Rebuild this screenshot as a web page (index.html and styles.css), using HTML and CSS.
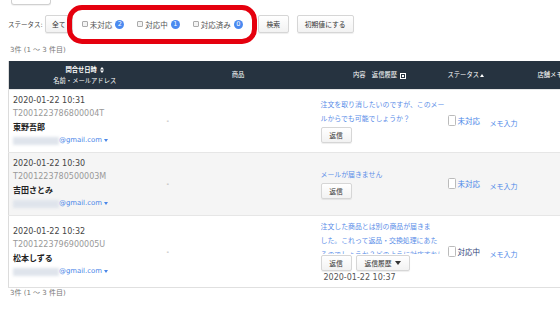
FILE: index.html
```html
<!DOCTYPE html>
<html lang="ja">
<head>
<meta charset="utf-8">
<title>問合せ一覧</title>
<link rel="stylesheet" href="styles.css">
</head>
<body>
<div class="page">
  <div class="top-btn"></div>
  <div class="filter">
    <span class="filter-label">ステータス:</span>
    <button class="btn btn-all">全て</button>
    <label class="chk"><span class="box"></span>未対応<span class="badge">2</span></label>
    <label class="chk"><span class="box"></span>対応中<span class="badge">1</span></label>
    <label class="chk"><span class="box"></span>対応済み<span class="badge">0</span></label>
    <button class="btn btn-search">検索</button>
    <button class="btn btn-reset">初期値にする</button>
  </div>
  <div class="count">3件 (1 ～ 3 件目)</div>
  <div class="table-wrap">
    <table class="list">
      <colgroup>
        <col class="c1"><col class="c2"><col class="c3"><col class="c4"><col class="c5">
      </colgroup>
      <thead>
        <tr>
          <th class="th-center"><div class="th-bold">問合せ日時 <svg class="ico" width="4" height="6" viewBox="0 0 4 6"><path d="M2 0L4 2.5H0Z M2 6L0 3.5H4Z" fill="#fff"/></svg></div><div>名前・メールアドレス</div></th>
          <th class="th-center">商品</th>
          <th class="th-center">内容　返信履歴 <svg class="ico" width="6" height="6" viewBox="0 0 6 6"><rect x=".5" y=".5" width="5" height="5" fill="none" stroke="#fff"/><rect x="2" y="2" width="2" height="2" fill="#fff"/></svg></th>
          <th class="th-left">ステータス<svg class="ico" width="4" height="3" viewBox="0 0 4 3"><path d="M2 0L4 3H0Z" fill="#fff"/></svg></th>
          <th class="th-memo">店舗メモ</th>
        </tr>
      </thead>
      <tbody>
        <tr>
          <td class="who">
            <div class="date">2020-01-22 10:31</div>
            <div class="oid">T2001223786800004T</div>
            <div class="name">東野吾郎</div>
            <div class="email"><span class="blur"></span>@gmail.com <svg class="caret" width="4" height="3" viewBox="0 0 4 3"><path d="M0 0H4L2 3Z" fill="#4a86e8"/></svg></div>
          </td>
          <td class="prod">-</td>
          <td class="body">
            <div class="msg">注文を取り消したいのですが、このメー<br>ルからでも可能でしょうか？</div>
            <div class="acts"><button class="btn btn-reply">返信</button></div>
          </td>
          <td class="st"><label class="status"><span class="sbox"></span><span class="stext">未対応</span></label></td>
          <td class="memo"><a class="memo-link">メモ入力</a></td>
        </tr>
        <tr class="alt">
          <td class="who">
            <div class="date">2020-01-22 10:30</div>
            <div class="oid">T2001223780500003M</div>
            <div class="name">吉田さとみ</div>
            <div class="email"><span class="blur"></span>@gmail.com <svg class="caret" width="4" height="3" viewBox="0 0 4 3"><path d="M0 0H4L2 3Z" fill="#4a86e8"/></svg></div>
          </td>
          <td class="prod">-</td>
          <td class="body">
            <div class="msg">メールが届きません</div>
            <div class="acts"><button class="btn btn-reply">返信</button></div>
          </td>
          <td class="st"><label class="status"><span class="sbox"></span><span class="stext">未対応</span></label></td>
          <td class="memo"><a class="memo-link">メモ入力</a></td>
        </tr>
        <tr class="last">
          <td class="who">
            <div class="date">2020-01-22 10:32</div>
            <div class="oid">T2001223796900005U</div>
            <div class="name">松本しずる</div>
            <div class="email"><span class="blur"></span>@gmail.com <svg class="caret" width="4" height="3" viewBox="0 0 4 3"><path d="M0 0H4L2 3Z" fill="#4a86e8"/></svg></div>
          </td>
          <td class="prod">-</td>
          <td class="body">
            <div class="msg clip">注文した商品とは別の商品が届きま<br>した。これって返品・交換処理にあた<br>るのでしょうか？どのように対応すれば</div>
            <div class="acts"><button class="btn btn-reply">返信</button><button class="btn btn-hist">返信履歴 <svg width="6" height="4" viewBox="0 0 6 4"><path d="M0 0H6L3 4Z" fill="#333"/></svg></button></div>
            <div class="sent">2020-01-22 10:37</div>
          </td>
          <td class="st"><label class="status"><span class="sbox"></span><span class="stext done">対応中</span></label></td>
          <td class="memo"><a class="memo-link">メモ入力</a></td>
        </tr>
      </tbody>
    </table>
  </div>
  <div class="count count-bottom">3件 (1 ～ 3 件目)</div>
  <div class="annotation"></div>
</div>
</body>
</html>
```

FILE: styles.css
```css
* { box-sizing: border-box; }
html, body { margin: 0; padding: 0; background: #fff; overflow: hidden; }
body { font-family: "DejaVu Sans", "Noto Sans CJK JP", sans-serif; color: #333; }

.page { position: relative; width: 560px; height: 317px; padding-left: 8px; }

.top-btn {
  width: 40px; height: 5px; margin-left: 3px;
  border: 1px solid #d0d0d0; border-top: none; border-radius: 0 0 3px 3px;
  box-shadow: 0 1px 1px rgba(0,0,0,.06);
}

.filter { display: flex; align-items: center; height: 18px; margin-top: 10px; font-size: 7.5px; }
.filter-label { font-size: 6.5px; color: #444; margin-right: 2px; }

.btn {
  font-family: inherit; font-size: 6.8px; color: #333;
  height: 18px; padding: 0; border: 1px solid #d6d6d6; border-radius: 2px;
  background: linear-gradient(#fff, #f2f2f2);
  box-shadow: 0 1px 1px rgba(0,0,0,.07);
  display: inline-flex; align-items: center; justify-content: center; gap: 3px;
}
.btn-all { width: 28px; margin-right: 9px; }
.btn-search { width: 31px; margin-left: 2px; margin-right: 8px; }
.btn-reset { width: 57px; }

.chk { display: inline-flex; align-items: center; color: #555; margin-right: 13px; }
.chk .box { width: 6px; height: 6px; border: 1px solid #aaa; border-radius: 1px; background: #f3f3f3; margin-right: 2px; }
.badge {
  width: 9px; height: 9px; border-radius: 50%; background: #4a8af0; color: #fff;
  font-size: 6.5px; line-height: 9px; text-align: center; margin-left: 3px;
}

.count { font-size: 7px; color: #777; line-height: 14px; margin-top: 10px; padding-left: 2px; }
.count-bottom { margin-top: 0; line-height: 10px; }

.table-wrap { width: 552px; overflow: hidden; margin-top: 4px; }
.list { border-collapse: collapse; table-layout: fixed; width: 597px; border-left: 1px solid #dcdcdc; }
.c1 { width: 152px; } .c2 { width: 155px; } .c3 { width: 128px; } .c4 { width: 42px; } .c5 { width: 120px; }

.list th {
  background: #263340; color: #fff; font-weight: normal; font-size: 6.3px; line-height: 11px;
  height: 28px; padding: 0 4px; white-space: nowrap;
}
.th-center { text-align: center; }
.th-left { text-align: left; }
.th-memo { text-align: left; padding-left: 52px !important; }
.th-bold { font-weight: bold; }
.ico { margin-left: 1px; vertical-align: middle; }

.list td { border-top: 1px solid #e6e6e6; padding: 4px; vertical-align: middle; }
.list tr.alt td { background: #f5f5f5; }
.list tr.last td { border-bottom: 1px solid #e0e0e0; padding-bottom: 3px; }

.who { line-height: 13.5px; white-space: nowrap; }
.date { font-size: 8px; color: #444; }
.oid { font-size: 8px; color: #999; }
.name { font-size: 8px; font-weight: bold; color: #222; }
.email { font-size: 6.9px; color: #4a86e8; display: flex; align-items: center; }
.blur { display: inline-block; width: 46px; height: 8px; background: #dfe4ec; filter: blur(1.5px); }
.caret { margin-left: 2px; }

.prod { padding-left: 6px !important; font-size: 7px; color: #888; }

.body { padding-left: 5px !important; }
.msg { font-size: 6.9px; line-height: 14px; color: #5b8ee8; white-space: nowrap; }
.msg.clip { max-height: 34px; overflow: hidden; }
.acts { display: flex; gap: 4px; margin-top: 1px; }
.btn-reply { width: 31px; height: 16px; }
.btn-hist { width: 54px; height: 16px; }
.sent { font-size: 8px; color: #555; line-height: 13px; padding-left: 3px; }

.st { white-space: nowrap; }
.status { display: inline-flex; align-items: center; }
.sbox { width: 8px; height: 11px; border: 1px solid #bbb; border-radius: 1.5px; background: #fff; margin-right: 2px; }
.stext { font-size: 7.5px; color: #4a86e8; }
.stext.done { color: #2f3f78; }
.memo { white-space: nowrap; }
.memo-link { font-size: 7px; color: #4a86e8; }

.annotation {
  position: absolute; left: 67px; top: 5px; width: 190px; height: 39px;
  border: 5px solid #e5000e; border-radius: 15px;
}
```
